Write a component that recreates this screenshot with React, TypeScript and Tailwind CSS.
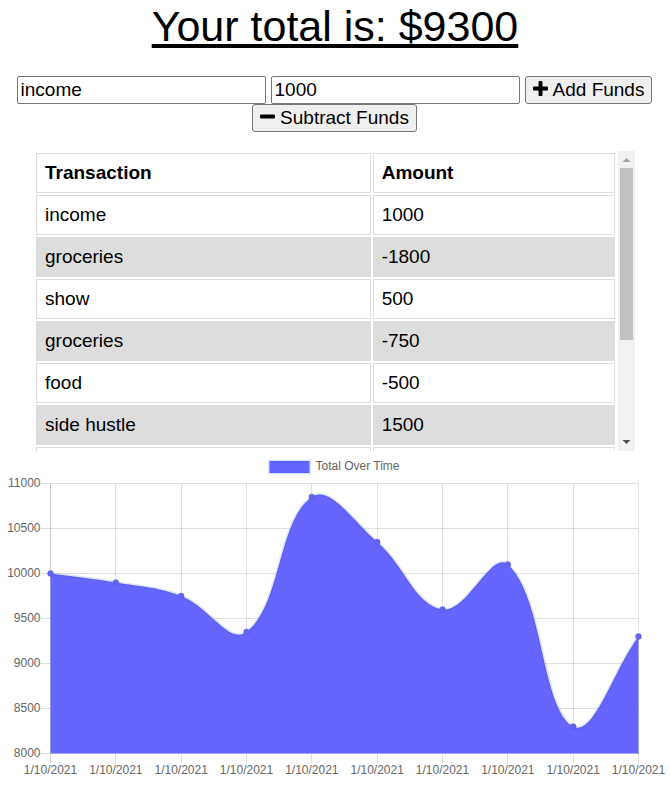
const transactions = [
  { name: "income", amount: 1000 },
  { name: "groceries", amount: -1800 },
  { name: "show", amount: 500 },
  { name: "groceries", amount: -750 },
  { name: "food", amount: -500 },
  { name: "side hustle", amount: 1500 },
];

const totals = [10000, 9900, 9750, 9350, 10850, 10350, 9600, 10100, 8300, 9300];
const yTicks = [11000, 10500, 10000, 9500, 9000, 8500, 8000];
const date = "1/10/2021";

const area = { left: 50.5, right: 638.5, top: 32.5, bottom: 302.5 };

type Point = { x: number; y: number };

const xAt = (i: number) => area.left + ((area.right - area.left) * i) / (totals.length - 1);
const yAt = (v: number) => area.bottom - ((v - 8000) / 3000) * (area.bottom - area.top);
const crisp = (n: number) => Math.floor(n) + 0.5;

const points: Point[] = totals.map((v, i) => ({ x: xAt(i), y: yAt(v) }));

// Control points of a cardinal spline, weighted by the distance to each neighbour.
function controls(prev: Point, cur: Point, next: Point, tension = 0.4) {
  const d01 = Math.hypot(cur.x - prev.x, cur.y - prev.y);
  const d12 = Math.hypot(next.x - cur.x, next.y - cur.y);
  const fa = (tension * d01) / (d01 + d12);
  const fb = (tension * d12) / (d01 + d12);
  return {
    before: { x: cur.x - fa * (next.x - prev.x), y: cur.y - fa * (next.y - prev.y) },
    after: { x: cur.x + fb * (next.x - prev.x), y: cur.y + fb * (next.y - prev.y) },
  };
}

const handles = points.map((p, i) => controls(points[i - 1] ?? p, p, points[i + 1] ?? p));

const line = points
  .map((p, i) => {
    if (i === 0) return `M${p.x} ${p.y}`;
    const a = handles[i - 1].after;
    const b = handles[i].before;
    return `C${a.x} ${a.y} ${b.x} ${b.y} ${p.x} ${p.y}`;
  })
  .join("");

function Chart() {
  return (
    <svg
      viewBox="0 0 670 335"
      role="img"
      aria-label="Total Over Time"
      className="block w-full text-[12px]"
      fill="#666666"
    >
      <rect x="269.5" y="10" width="40" height="12" fill="#6666ff" />
      <rect x="269.5" y="10" width="40" height="12" fill="none" stroke="#4466ee" strokeOpacity="0.18" strokeWidth="3" />
      <text x="315.5" y="19">Total Over Time</text>

      <g stroke="#000000" strokeOpacity="0.12">
        {yTicks.map((v) => (
          <line key={v} x1={area.left - 10} x2={area.right} y1={crisp(yAt(v))} y2={crisp(yAt(v))} />
        ))}
        {points.map((p) => (
          <line key={p.x} x1={crisp(p.x)} x2={crisp(p.x)} y1={area.top} y2={area.bottom + 10} />
        ))}
        <line x1="50.5" x2="50.5" y1={area.top} y2={area.bottom} />
      </g>

      <path d={`${line}L${area.right} ${area.bottom}L${area.left} ${area.bottom}Z`} fill="#6666ff" />
      <path d={line} fill="none" stroke="#2244bb" strokeOpacity="0.14" strokeWidth="3" />
      {points.map((p) => (
        <circle key={p.x} cx={p.x} cy={p.y} r="3" fill="#6464ee" stroke="#4a4ac8" strokeOpacity="0.25" />
      ))}

      {yTicks.map((v) => (
        <text key={v} x="40.5" y={yAt(v) + 3.5} textAnchor="end">
          {v}
        </text>
      ))}
      {points.map((p) => (
        <text key={p.x} x={p.x} y="323" textAnchor="middle">
          {date}
        </text>
      ))}
    </svg>
  );
}

function SignIcon({ plus = false }: { plus?: boolean }) {
  return (
    <svg viewBox="0 0 15 15" className="mb-[3px] h-[15px] w-[15px]" fill="currentColor" aria-hidden>
      <rect x="0" y="5.5" width="15" height="4" rx="1" />
      {plus && <rect x="5.5" y="0" width="4" height="15" rx="1" />}
    </svg>
  );
}

const field = "h-7 w-[249px] rounded-[2px] border border-[#767676] bg-white px-[3px] outline-none";
const button =
  "flex h-7 items-center gap-[5px] rounded-[3px] border border-[#767676] bg-[#efefef] px-[7px] whitespace-nowrap";
const cell = "h-10 border border-[#dddddd] px-2 py-0 text-left";

export default function App() {
  return (
    <main className="bg-white font-['Liberation_Sans',Arial,sans-serif] text-[19px] leading-[22px] text-black">
      <h1 className="text-center text-[43px] leading-[52px] underline decoration-4 underline-offset-[3px]">
        Your total is: $9300
      </h1>

      <form className="mt-6 flex flex-wrap justify-center gap-x-[5px] pr-px" onSubmit={(e) => e.preventDefault()}>
        <input type="text" aria-label="Name of transaction" defaultValue="income" className={field} />
        <input type="text" inputMode="numeric" aria-label="Transaction amount" defaultValue="1000" className={field} />
        <button type="button" className={button}>
          <SignIcon plus />
          Add Funds
        </button>
        <button type="button" className={button}>
          <SignIcon />
          Subtract Funds
        </button>
      </form>

      <div className="mt-[19px] mr-[35px] ml-[34px] flex h-[300px]">
        <div className="mr-px flex-1 overflow-y-auto [scrollbar-width:none]">
          <table className="w-full table-fixed border-separate border-spacing-[2px]">
            <thead>
              <tr>
                <th className={`${cell} w-[58%] font-bold`}>Transaction</th>
                <th className={`${cell} font-bold`}>Amount</th>
              </tr>
            </thead>
            <tbody>
              {transactions.map((t, i) => (
                <tr key={i} className="even:[&>td]:bg-[#dddddd]">
                  <td className={cell}>{t.name}</td>
                  <td className={cell}>{t.amount}</td>
                </tr>
              ))}
              <tr>
                <td className={cell} />
                <td className={cell} />
              </tr>
            </tbody>
          </table>
        </div>
        <div aria-hidden className="flex w-[17px] flex-col items-center bg-[#f1f1f1]">
          <svg viewBox="0 0 17 17" className="h-[17px] w-[17px] shrink-0">
            <path d="M4.5 11L8.5 7L12.5 11Z" fill="#a3a3a3" />
          </svg>
          <div className="h-[172px] w-[13px] bg-[#c1c1c1]" />
          <svg viewBox="0 0 17 17" className="mt-auto h-[17px] w-[17px] shrink-0">
            <path d="M4.5 6L8.5 10L12.5 6Z" fill="#505050" />
          </svg>
        </div>
      </div>

      <Chart />
    </main>
  );
}
